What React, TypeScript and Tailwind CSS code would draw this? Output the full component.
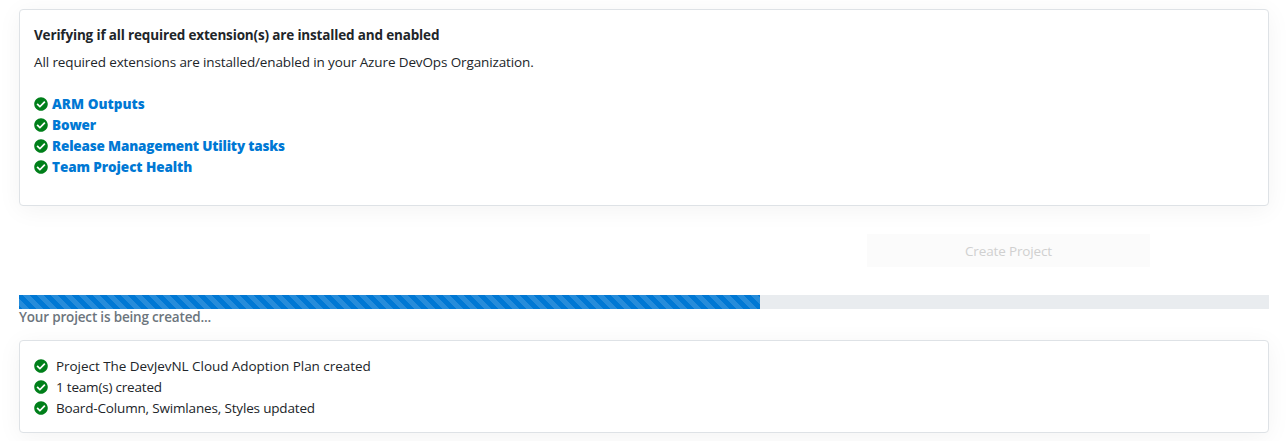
import type { ReactNode } from "react";
import { FaCheckCircle } from "react-icons/fa";

const extensions = [
  { name: "ARM Outputs", tracking: "tracking-[0.04px]" },
  { name: "Bower", tracking: "tracking-[-0.16px]" },
  { name: "Release Management Utility tasks", tracking: "tracking-[-0.175px]" },
  { name: "Team Project Health", tracking: "tracking-[-0.08px]" },
];

const steps = [
  { text: "Project The DevJevNL Cloud Adoption Plan created", tracking: "tracking-[-0.05px]" },
  { text: "1 team(s) created", tracking: "tracking-[-0.2px]" },
  { text: "Board-Column, Swimlanes, Styles updated", tracking: "tracking-[-0.165px]" },
];

function Card({ className, children }: { className: string; children: ReactNode }) {
  return (
    <section
      className={`rounded-[4px] border border-[#dee2e6] bg-white px-[14px] shadow-[0_4px_24px_rgba(0,0,0,0.05)] ${className}`}
    >
      {children}
    </section>
  );
}

function Check() {
  return <FaCheckCircle className="size-[14px] shrink-0 text-[#007f1a]" />;
}

export default function App() {
  return (
    <main className="h-[441px] overflow-hidden bg-white px-[19px] pt-[9px] font-['Segoe_UI','Open_Sans',sans-serif] text-[13.5px] leading-[21px] text-[#212529]">
      <Card className="h-[197px] pt-[15px]">
        <h1 className="w-fit font-bold tracking-[-0.16px]">
          Verifying if all required extension(s) are installed and enabled
        </h1>
        <p className="mt-[6px] w-fit tracking-[-0.12px]">
          All required extensions are installed/enabled in your Azure DevOps Organization.
        </p>
        <ul className="mt-[20px]">
          {extensions.map((e) => (
            <li key={e.name} className="flex h-[21px] items-center gap-[4px]">
              <Check />
              <a className={`pt-[2px] font-extrabold text-[#0078d4] ${e.tracking}`}>{e.name}</a>
            </li>
          ))}
        </ul>
      </Card>

      <div className="mt-[28px] flex justify-end pr-[119px]">
        <button
          disabled
          className="h-[33px] w-[283px] bg-[#fbfbfb] pt-[2px] text-[13.5px] leading-[21px] tracking-[-0.14px] text-[#d0d0d0]"
        >
          Create Project
        </button>
      </div>

      <div className="mt-[28px] h-[14px] bg-[#e9ecef]">
        <div className="h-full w-[741px] bg-[#0078d4] bg-[linear-gradient(45deg,rgba(255,255,255,0.15)_25%,transparent_25%,transparent_50%,rgba(255,255,255,0.15)_50%,rgba(255,255,255,0.15)_75%,transparent_75%,transparent)] bg-[length:14px_14px] bg-[position:4px_0]" />
      </div>
      <p className="mt-[-2px] w-fit font-semibold tracking-[-0.18px] text-[#6c757d]">
        Your project is being created...
      </p>

      <Card className="mt-[12px] h-[93px] pt-[14px]">
        <ul>
          {steps.map((s) => (
            <li key={s.text} className="flex h-[21px] items-center gap-[8px]">
              <Check />
              <span className={`pt-[2px] ${s.tracking}`}>{s.text}</span>
            </li>
          ))}
        </ul>
      </Card>
    </main>
  );
}
